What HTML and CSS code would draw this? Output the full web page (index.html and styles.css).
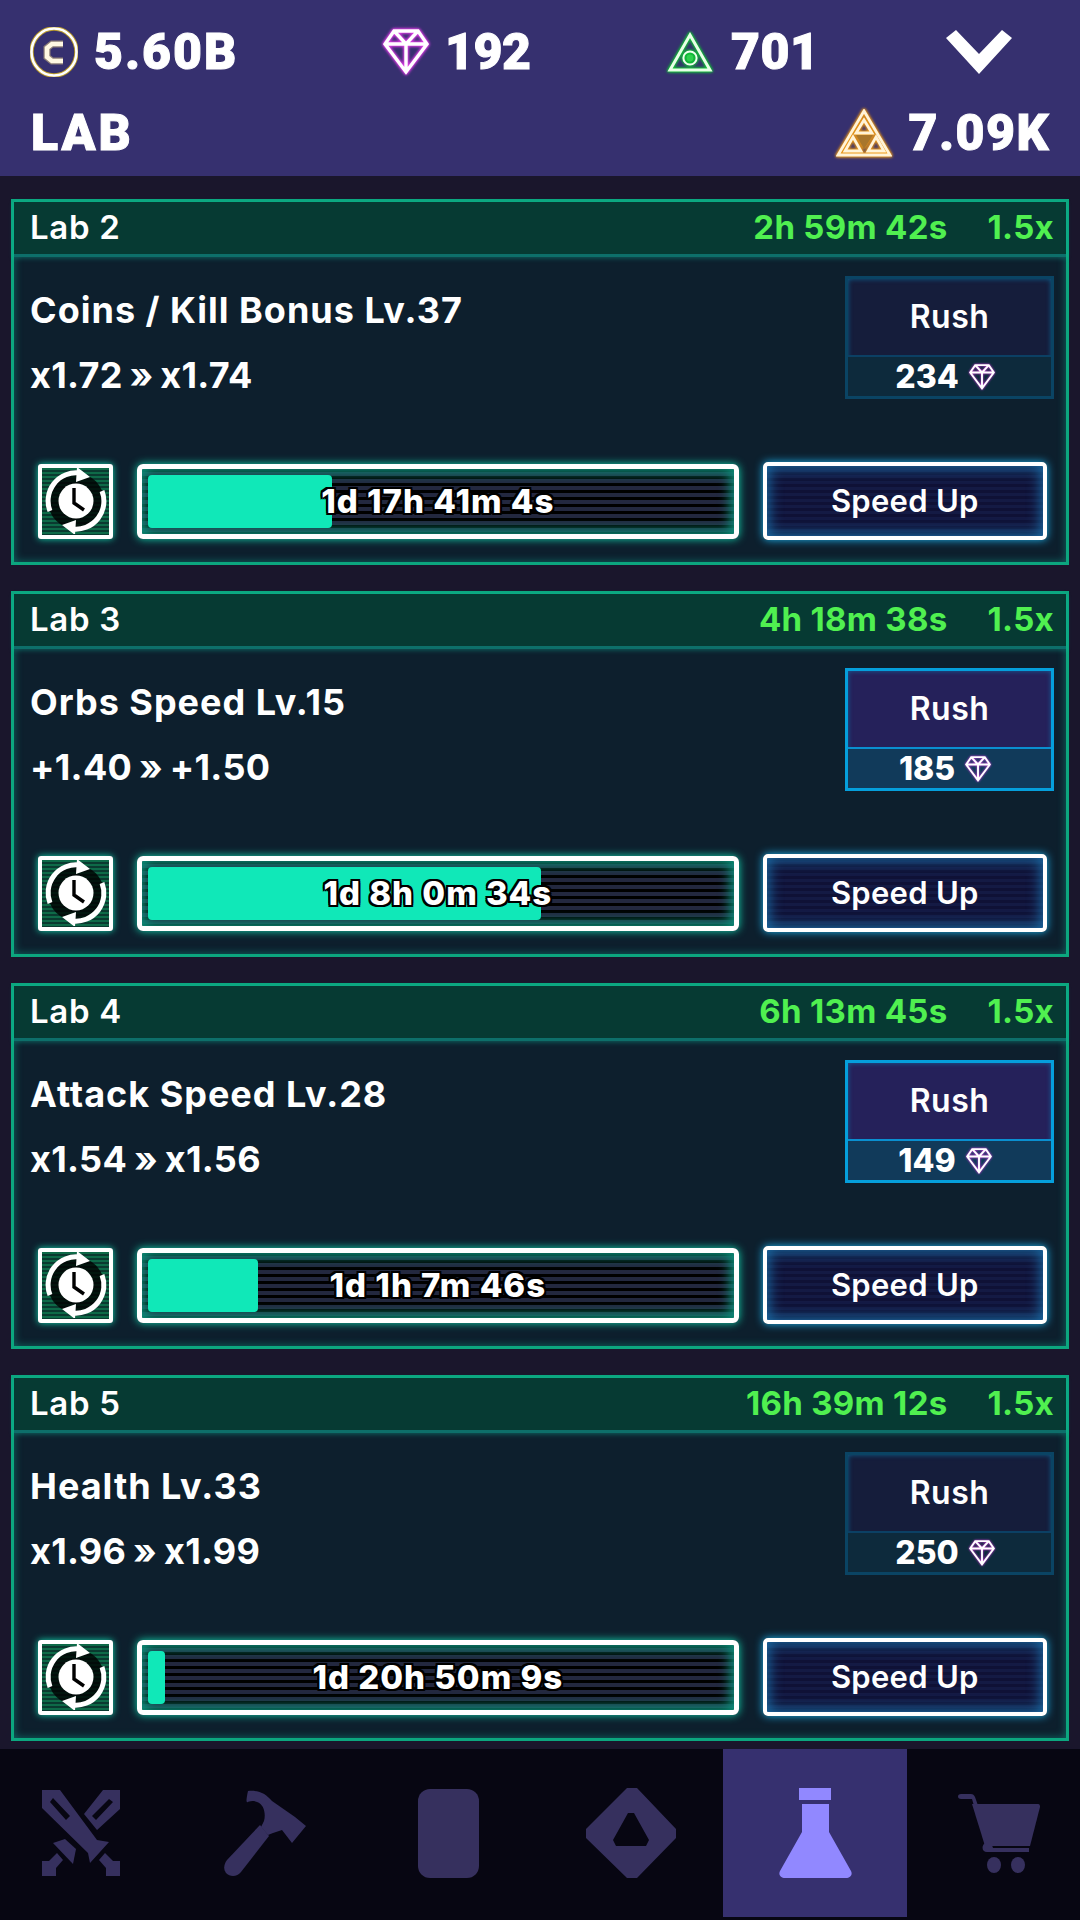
FILE: index.html
```html
<!DOCTYPE html>
<html lang="en">
<head>
  <meta charset="UTF-8">
  <title>Lab</title>
  <link rel="stylesheet" href="styles.css">
</head>
<body>

<svg class="defs" width="0" height="0">
  <symbol id="gem" viewBox="0 0 46 46">
    <path d="M11 2H35L44 15L23 43L2 15ZM2 15H44M11 2L23 15L35 2M23 15V43" fill="none" stroke="currentColor" stroke-width="3.4" stroke-linejoin="miter"/>
  </symbol>
  <symbol id="clock" viewBox="0 0 66 66">
    <circle cx="33" cy="33" r="28" fill="#000" opacity=".8"/>
    <path d="M7 43A28 28 0 0 1 36 5" fill="none" stroke="#fff" stroke-width="5"/>
    <path d="M59 23A28 28 0 0 1 30 61" fill="none" stroke="#fff" stroke-width="5"/>
    <path d="M34 -1L47 9L33 14Z M32 67L19 57L33 52Z" fill="#fff"/>
    <circle cx="33" cy="33" r="17.5" fill="#fff"/>
    <path d="M31 20V35L41 42" fill="none" stroke="#000" stroke-width="3.4"/>
  </symbol>
</svg>

<header class="topbar">
  <div class="top-row">
    <div class="stat stat-coins">
      <svg class="stat-icon" width="48" height="50" viewBox="0 0 48 50">
        <ellipse cx="24" cy="25" rx="22.5" ry="23.5" fill="none" stroke="#b99a2c" stroke-width="4.4"/>
        <ellipse cx="24" cy="25" rx="22.5" ry="23.5" fill="none" stroke="#fff" stroke-width="2.6"/>
        <path d="M33 17H22L17 21V30L22 34H33" fill="none" stroke="#8d7f78" stroke-width="7"/>
        <path d="M33 17H22L17 21V30L22 34H33" fill="none" stroke="#fff8e2" stroke-width="4.6"/>
      </svg>
      <span>5.60B</span>
    </div>
    <div class="stat stat-gems">
      <svg class="stat-icon gem-glow" width="46" height="46"><use href="#gem"/></svg>
      <span>192</span>
    </div>
    <div class="stat stat-tri">
      <svg class="stat-icon glow-green" width="46" height="42" viewBox="0 0 46 42">
        <path d="M23 4L43 39H3Z" fill="none" stroke="#e8ffe8" stroke-width="3"/>
        <circle cx="23" cy="27" r="6.6" fill="none" stroke="#f0fff0" stroke-width="2"/>
        <circle cx="23" cy="27" r="3.4" fill="#2fd04e"/>
      </svg>
      <span>701</span>
    </div>
    <svg class="chevron" width="66" height="44" viewBox="0 0 66 44">
      <path d="M0 8L10 0L33 24L56 0L66 8L33 44Z" fill="#fff"/>
    </svg>
  </div>
  <div class="top-row second">
    <h1 class="page-title">LAB</h1>
    <div class="stat stat-tiers">
      <svg class="stat-icon glow-orange" width="56" height="48" viewBox="0 0 56 48">
        <path d="M20 26H37L28 40Z" fill="#a8762c"/>
        <g fill="none" stroke="#fff3d8" stroke-width="2.8">
          <path d="M28 2L54 46H2Z"/>
          <path d="M28 11L36 24H20Z"/>
          <path d="M17 28L25 42H9Z"/>
          <path d="M40 28L48 42H32Z"/>
        </g>
      </svg>
      <span>7.09K</span>
    </div>
  </div>
</header>

<main class="labs">

  <section class="lab-card">
    <div class="lab-head">
      <span class="lab-name">Lab 2</span>
      <span class="lab-time">2h 59m 42s</span>
      <span class="lab-mult">1.5x</span>
    </div>
    <div class="lab-body">
      <div class="lab-info">
        <div class="lab-text">
          <p>Coins / Kill Bonus Lv.37</p>
          <p class="lab-value">x1.72 » x1.74</p>
        </div>
        <div class="rush dim">
          <div class="rush-label">Rush</div>
          <div class="rush-cost">234 <svg class="gem-small" width="26" height="26"><use href="#gem"/></svg></div>
        </div>
      </div>
      <div class="lab-actions">
        <div class="clock-btn"><svg width="66" height="66"><use href="#clock"/></svg></div>
        <div class="progress">
          <div class="progress-fill" style="width: 31.7%"></div>
          <span class="progress-text">1d 17h 41m 4s</span>
        </div>
        <div class="speed-btn">Speed Up</div>
      </div>
    </div>
  </section>

  <section class="lab-card">
    <div class="lab-head">
      <span class="lab-name">Lab 3</span>
      <span class="lab-time">4h 18m 38s</span>
      <span class="lab-mult">1.5x</span>
    </div>
    <div class="lab-body">
      <div class="lab-info">
        <div class="lab-text">
          <p>Orbs Speed Lv.15</p>
          <p class="lab-value">+1.40 » +1.50</p>
        </div>
        <div class="rush">
          <div class="rush-label">Rush</div>
          <div class="rush-cost">185 <svg class="gem-small" width="26" height="26"><use href="#gem"/></svg></div>
        </div>
      </div>
      <div class="lab-actions">
        <div class="clock-btn"><svg width="66" height="66"><use href="#clock"/></svg></div>
        <div class="progress">
          <div class="progress-fill" style="width: 67.8%"></div>
          <span class="progress-text">1d 8h 0m 34s</span>
        </div>
        <div class="speed-btn">Speed Up</div>
      </div>
    </div>
  </section>

  <section class="lab-card">
    <div class="lab-head">
      <span class="lab-name">Lab 4</span>
      <span class="lab-time">6h 13m 45s</span>
      <span class="lab-mult">1.5x</span>
    </div>
    <div class="lab-body">
      <div class="lab-info">
        <div class="lab-text">
          <p>Attack Speed Lv.28</p>
          <p class="lab-value">x1.54 » x1.56</p>
        </div>
        <div class="rush">
          <div class="rush-label">Rush</div>
          <div class="rush-cost">149 <svg class="gem-small" width="26" height="26"><use href="#gem"/></svg></div>
        </div>
      </div>
      <div class="lab-actions">
        <div class="clock-btn"><svg width="66" height="66"><use href="#clock"/></svg></div>
        <div class="progress">
          <div class="progress-fill" style="width: 19%"></div>
          <span class="progress-text">1d 1h 7m 46s</span>
        </div>
        <div class="speed-btn">Speed Up</div>
      </div>
    </div>
  </section>

  <section class="lab-card">
    <div class="lab-head">
      <span class="lab-name">Lab 5</span>
      <span class="lab-time">16h 39m 12s</span>
      <span class="lab-mult">1.5x</span>
    </div>
    <div class="lab-body">
      <div class="lab-info">
        <div class="lab-text">
          <p>Health Lv.33</p>
          <p class="lab-value">x1.96 » x1.99</p>
        </div>
        <div class="rush dim">
          <div class="rush-label">Rush</div>
          <div class="rush-cost">250 <svg class="gem-small" width="26" height="26"><use href="#gem"/></svg></div>
        </div>
      </div>
      <div class="lab-actions">
        <div class="clock-btn"><svg width="66" height="66"><use href="#clock"/></svg></div>
        <div class="progress">
          <div class="progress-fill" style="width: 3%"></div>
          <span class="progress-text">1d 20h 50m 9s</span>
        </div>
        <div class="speed-btn">Speed Up</div>
      </div>
    </div>
  </section>

</main>

<nav class="tabs">
  <div class="tab nudge">
    <svg width="78" height="86" viewBox="0 0 78 86">
      <path d="M0 0H18L55 50L67 52L48 73L46 63L0 18ZM11 8L28 26L24 30L8 12Z" fill-rule="evenodd"/>
      <path d="M61 0H78V19L55 40L42 24ZM67 9L50 26L54 30L71 12Z" fill-rule="evenodd"/>
      <path d="M11 53L23 49L34 59L31 74Z"/>
      <path d="M0 71H7L15 63L21 70L14 78V86H0Z"/>
      <path d="M78 71H71L63 63L57 70L64 78V86H78Z"/>
    </svg>
  </div>
  <div class="tab nudge">
    <svg width="82" height="87" viewBox="0 0 82 87">
      <path d="M24 1C36 0 42 4 48 11L71 27L82 36L68 53L58 40L49 43L44 45L37 37L40 31C42 24 40 14 33 12C28 10 24 12 24 12C22 13 22 10 24 1Z"/>
      <path d="M36 35L45 46L17 82C13 87 6 87 2 83C-1 79 0 74 3 70Z"/>
    </svg>
  </div>
  <div class="tab">
    <div class="card-shape"></div>
  </div>
  <div class="tab">
    <svg width="90" height="90" viewBox="0 0 90 90">
      <path d="M41 0H51L90 41V50L51 90H41L0 50V41ZM42 25L27 52L30 58H60L63 52L48 25Z" fill-rule="evenodd"/>
    </svg>
  </div>
  <div class="tab active">
    <svg width="73" height="90" viewBox="0 0 73 90">
      <path d="M20 0H52V12H20ZM23 16H50V44L72 83C74 87 71 90 67 90H6C2 90 -1 87 1 83L23 44Z"/>
    </svg>
  </div>
  <div class="tab">
    <svg width="82" height="79" viewBox="0 0 82 79">
      <path d="M3 0H13C15 0 16 1 17 3L35 54H71V58H29C24 58 23 52 27 49L14 5H3C-1 5 -1 0 3 0Z"/>
      <path d="M14 10H80C82 10 82 12 82 13L72 52H27Z"/>
      <ellipse cx="36" cy="71" rx="7" ry="8"/>
      <ellipse cx="60" cy="71" rx="7" ry="8"/>
    </svg>
  </div>
</nav>

</body>
</html>
```

FILE: styles.css
```css
* { box-sizing: border-box; }
html, body { margin: 0; padding: 0; }
body { width: 1080px; height: 1920px; overflow: hidden; background: #1a162c; color: #fff; font-family: Inter, Roboto, sans-serif; display: flex; flex-direction: column; }
p, h1 { margin: 0; }
.defs { position: absolute; }

.topbar { height: 176px; background: #36306f; padding: 27px 30px 0; font-family: Roboto, sans-serif; }
.top-row { display: grid; grid-template-columns: 352px 285px 279px auto; align-items: center; height: 50px; }
.top-row.second { display: flex; justify-content: space-between; align-items: center; margin-top: 31px; padding: 0 0 0 1px; }
.stat { display: flex; align-items: center; gap: 16px; font-size: 50px; line-height: 1; font-weight: 900; letter-spacing: 2px; -webkit-text-stroke: 1px #fff; }
.stat-gems { letter-spacing: -.5px; margin-left: 1px; }
.stat-tri { letter-spacing: .5px; gap: 18px; }
.stat-tiers { letter-spacing: 1.5px; }
.stat-icon { display: block; flex: none; }
.gem-glow { color: #fff; filter: drop-shadow(0 0 1.5px #e23ce8) drop-shadow(0 0 1px #e23ce8); }
.glow-green { filter: drop-shadow(0 0 1.5px #0ccf30) drop-shadow(0 0 1px #0ccf30); }
.glow-orange { filter: drop-shadow(0 0 1.5px #f09a14) drop-shadow(0 0 1px #f09a14); }
.page-title { font-size: 50px; line-height: 1; font-weight: 900; letter-spacing: 3px; -webkit-text-stroke: 1px #fff; }
.chevron { display: block; }

.labs { height: 1573px; padding: 23px 11px 0; display: flex; flex-direction: column; gap: 26px; }
.lab-card { height: 366px; border: 3px solid #0ca67f; background: #0d1f2d; display: flex; flex-direction: column; box-shadow: inset 0 0 8px rgba(16, 200, 170, .45); }
.lab-head { height: 55px; flex: none; display: flex; align-items: center; gap: 40px; padding: 0 12px 2px 16px; background: #063a33; border-bottom: 3px solid #0d6f6a; box-shadow: 0 1px 5px rgba(16, 200, 170, .4); font-size: 33px; font-weight: 700; letter-spacing: .3px; }
.lab-name { margin-right: auto; font-weight: 600; letter-spacing: .7px; }
.lab-time, .lab-mult { color: #50f050; }

.lab-body { flex: 1; display: flex; flex-direction: column; }
.lab-info { height: 205px; padding: 21px 12px 0 16px; display: flex; justify-content: space-between; align-items: flex-start; }
.lab-text { font-size: 36px; font-weight: 700; line-height: 65px; letter-spacing: 1px; }
.lab-value { letter-spacing: .3px; word-spacing: -2px; }

.rush { width: 209px; height: 123px; margin-top: -2px; border: 3px solid #059fdc; background: #25215a; display: flex; flex-direction: column; box-shadow: inset 0 0 5px rgba(5, 159, 220, .5); }
.rush-label { height: 79px; display: flex; align-items: center; justify-content: center; padding-bottom: 2px; font-size: 32px; font-weight: 600; letter-spacing: .5px; border-bottom: 2px solid #0a8fd0; }
.rush-cost { flex: 1; display: flex; align-items: center; justify-content: center; gap: 10px; padding-right: 9px; background: #113a5a; font-size: 32px; font-weight: 800; }
.rush.dim { border-color: #0a4464; background: #151d3b; }
.rush.dim .rush-label { border-bottom-color: #0b4064; }
.rush.dim .rush-cost { background: #0d2a3c; }
.gem-small { color: #fff; filter: drop-shadow(0 0 1px #e23ce8); }

.lab-actions { display: flex; align-items: center; padding: 0 19px 0 24px; }
.clock-btn { width: 75px; height: 75px; flex: none; border: 4px solid #fff; border-radius: 3px; display: flex; align-items: center; justify-content: center; box-shadow: 0 0 7px #12d8b0; background: repeating-linear-gradient(to bottom, #0e6a48 0 2px, #0a3a30 2px 4px); }
.progress { position: relative; width: 603px; height: 75px; margin-left: 24px; padding: 6px; border: 5px solid #fff; border-radius: 6px; box-shadow: 0 0 9px #12d8b0, inset 0 0 12px 4px #0c8f7a; background: repeating-linear-gradient(to bottom, #000 0 3px, #23283f 3px 7px); }
.progress-fill { height: 100%; background: #10e8b8; border-radius: 4px; position: relative; }
.progress-text { position: absolute; left: 0; right: 0; top: 0; bottom: 0; display: flex; align-items: center; justify-content: center; font-size: 33px; font-weight: 800; letter-spacing: 1px; text-shadow: -2px -2px 0 #000, 2px -2px 0 #000, -2px 2px 0 #000, 2px 2px 0 #000, 0 2px 0 #000, 0 -2px 0 #000, 2px 0 0 #000, -2px 0 0 #000; }
.speed-btn { width: 285px; height: 78px; margin-left: 24px; border: 4px solid #fff; border-radius: 5px; display: flex; align-items: center; justify-content: center; padding-bottom: 2px; font-size: 31px; font-weight: 600; letter-spacing: .3px; box-shadow: 0 0 8px #1cb4f0, inset 0 0 14px 2px #1a6fa8; background: repeating-linear-gradient(to bottom, #0f1136 0 3px, #141a44 3px 6px); }

.tabs { flex: 1; background: #070612; display: grid; grid-template-columns: repeat(6, 184px); justify-content: center; overflow: hidden; padding: 0 2px 3px 0; }
.tab { display: flex; align-items: center; justify-content: center; fill: #36305e; }
.tab.active { background: #36306f; fill: #9188ff; }
.tab.nudge svg { margin-left: 4px; }
.card-shape { width: 61px; height: 89px; margin-left: 2px; border-radius: 12px; background: #36305e; }
```
